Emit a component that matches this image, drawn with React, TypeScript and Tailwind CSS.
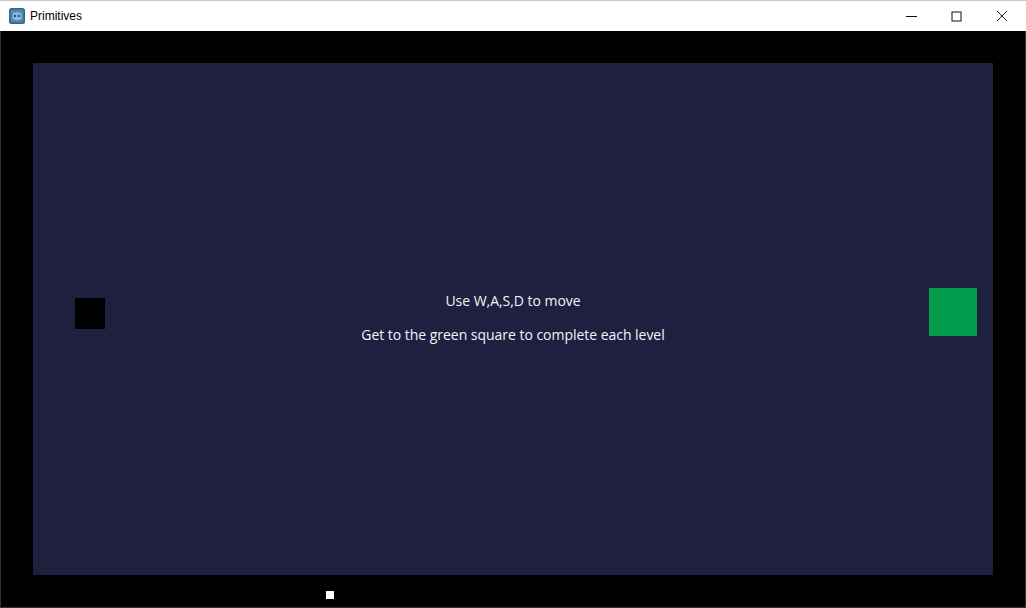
export default function App() {
  return (
    <div className="flex h-[608px] w-[1026px] flex-col overflow-hidden bg-black font-['Open_Sans',sans-serif]">
      <header className="flex h-[31px] shrink-0 items-center border-t border-t-[#c8c8c8] bg-white pl-[9px] font-['Liberation_Sans',sans-serif] text-[12px] text-black">
        <svg width="16" height="16" viewBox="0 0 16 16" className="mr-[5px]">
          <rect x="0" y="0" width="16" height="16" rx="2.5" fill="#3c6482" />
          <rect x="1.5" y="1.5" width="13" height="13" rx="2" fill="#4c86b5" />
          <path d="M3.5 7 L4.5 4 L6.3 5 L8 3.8 L9.7 5 L11.5 4 L12.5 7 V11 Q8 13.5 3.5 11 Z" fill="#8fbadb" />
          <circle cx="6" cy="8" r="1.3" fill="#2f5f86" />
          <circle cx="10" cy="8" r="1.3" fill="#2f5f86" />
        </svg>
        <span>Primitives</span>
        <div className="ml-auto flex h-full items-center pr-[1px]">
          <div className="flex h-full w-[45px] items-center justify-center">
            <svg width="11" height="11" viewBox="0 0 11 11"><path d="M0 5.5H11" stroke="#111" strokeWidth="1" /></svg>
          </div>
          <div className="flex h-full w-[45px] items-center justify-center">
            <svg width="11" height="11" viewBox="0 0 11 11"><rect x="1" y="1" width="9" height="9" fill="none" stroke="#111" strokeWidth="1" /></svg>
          </div>
          <div className="flex h-full w-[46px] items-center justify-center">
            <svg width="12" height="12" viewBox="0 0 12 12"><path d="M1 1L11 11M11 1L1 11" stroke="#222" strokeWidth="1" /></svg>
          </div>
        </div>
      </header>
      <main className="relative flex-1 border-x border-b border-[#333] bg-black px-[32px] pb-[32px] pt-[32px]">
        <div className="relative h-[512px] w-[960px] bg-[#1f2040]">
          <div className="absolute left-[42px] top-[235px] h-[31px] w-[30px] bg-black" />
          <div className="absolute left-[896px] top-[225px] h-[48px] w-[48px] bg-[#019c4b]" />
          <div className="absolute left-0 right-0 top-[228px] flex flex-col items-center gap-[14px] text-[14px] leading-[20px] tracking-[-0.03px] text-[#f2f4f6]">
            <p>Use W,A,S,D to move</p>
            <p>Get to the green square to complete each level</p>
          </div>
        </div>
        <div className="absolute left-[325px] top-[560px] h-[8px] w-[8px] bg-white" />
      </main>
    </div>
  );
}
